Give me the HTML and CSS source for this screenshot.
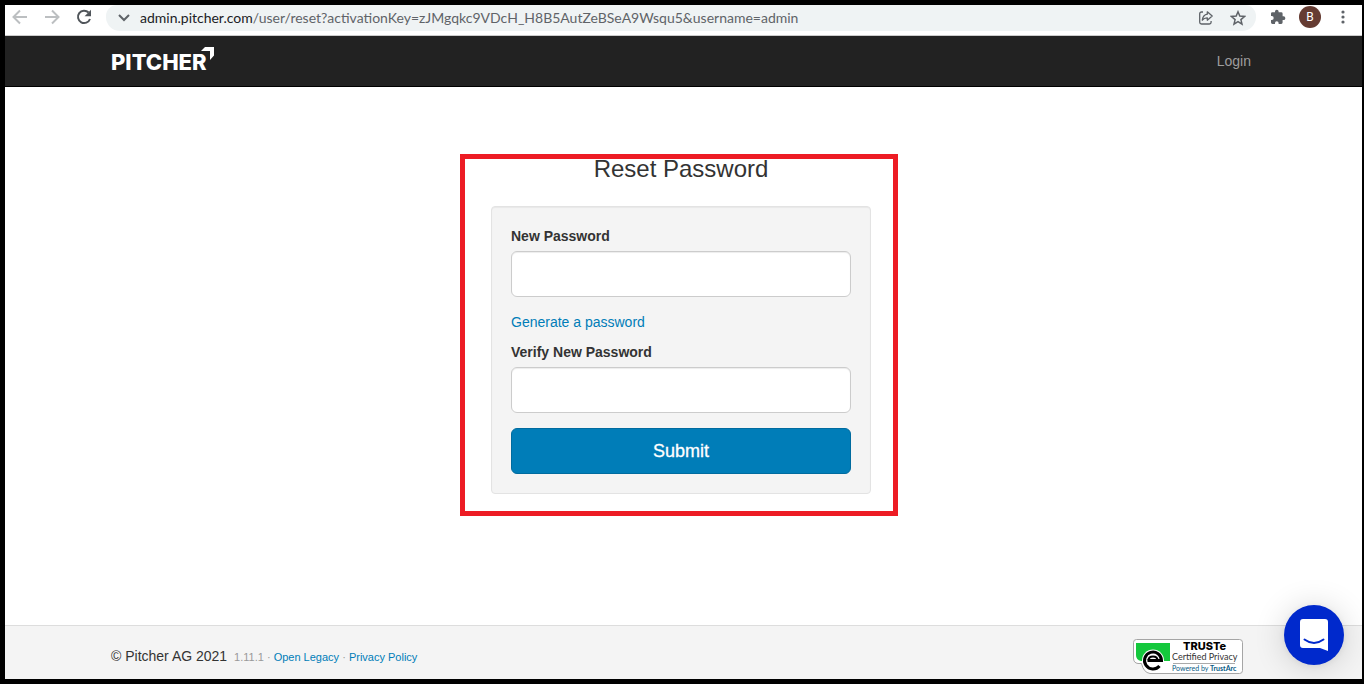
FILE: index.html
```html
<!DOCTYPE html>
<html lang="en">
<head>
<meta charset="utf-8">
<title>Reset Password</title>
<link rel="stylesheet" href="styles.css">
</head>
<body>
<div class="window">
  <div class="toolbar">
    <button class="tool" aria-label="Back"><svg width="16" height="16" viewBox="0 0 16 16" fill="none" stroke="#bcbfc1" stroke-width="2"><path d="M15 8H2M8 1.500 1.500 8 8 14.500"/></svg></button>
    <button class="tool" aria-label="Forward"><svg width="16" height="16" viewBox="0 0 16 16" fill="none" stroke="#bcbfc1" stroke-width="2"><path d="M1 8h13M8 1.500 14.500 8 8 14.500"/></svg></button>
    <button class="tool" aria-label="Reload"><svg width="16" height="16" viewBox="0 0 16 16" fill="none" stroke="#50555a" stroke-width="2"><path d="M12.600 3.500A6.200 6.200 0 1 0 14 10"/><path d="M15 .8v6.400H8.600z" fill="#50555a" stroke="none"/></svg></button>
    <div class="address">
      <button class="tool" aria-label="Site information"><svg width="12" height="8" viewBox="0 0 12 8" fill="none" stroke="#5f6368" stroke-width="2"><path d="M1 1l5 5 5-5"/></svg></button>
      <span class="url"><span class="host">admin.pitcher.com</span>/user/reset?activationKey=zJMgqkc9VDcH_H8B5AutZeBSeA9Wsqu5&amp;username=admin</span>
      <button class="tool" aria-label="Share"><svg width="16" height="16" viewBox="0 0 16 16" fill="none" stroke="#5f6368" stroke-width="1.300"><path d="M5 2H3.500A1.800 1.800 0 0 0 1.700 3.800v8.400A1.800 1.800 0 0 0 3.500 14h7.800a1.800 1.800 0 0 0 1.800-1.800V11"/><path d="M9.300 1.800 14.200 6l-4.900 4.200V7.800C7 7.700 5.500 8.500 4.300 10.200 4.700 7 6.200 4.700 9.300 4.200z" stroke-linejoin="round"/></svg></button>
      <button class="tool" aria-label="Bookmark"><svg width="16" height="16" viewBox="0 0 16 16" fill="none" stroke="#5f6368" stroke-width="1.500"><path d="M8 1.800l1.800 4.300 4.700.4-3.600 3.100 1.100 4.600L8 11.700l-4 2.500 1.100-4.600-3.600-3.100 4.700-.4z"/></svg></button>
    </div>
    <button class="tool" aria-label="Extensions"><svg width="16" height="16" viewBox="0 0 16 16" fill="#5f6368"><path d="M13.500 7.300h-.9V4.600a1.400 1.400 0 0 0-1.400-1.400H8.600v-.7a1.800 1.800 0 0 0-3.600 0v.7H2.400A1.400 1.400 0 0 0 1 4.600v2.500h.8a1.900 1.900 0 0 1 0 3.800H1v2.700A1.400 1.400 0 0 0 2.400 15H5v-.9a1.800 1.800 0 0 1 3.600 0v.9h2.600a1.400 1.400 0 0 0 1.400-1.400v-2.600h.9a1.850 1.850 0 0 0 0-3.700z"/></svg></button>
    <button class="avatar" aria-label="Profile">B</button>
    <button class="tool" aria-label="Menu"><svg width="4" height="14" viewBox="0 0 4 14" fill="#5f6368"><circle cx="2" cy="2" r="1.600"/><circle cx="2" cy="7" r="1.600"/><circle cx="2" cy="12" r="1.600"/></svg></button>
  </div>

  <header class="navbar">
    <div class="container">
      <a class="brand" href="#"><span>PITCHER</span><svg class="brand-mark" width="13" height="13" viewBox="0 0 13 13" fill="#fff"><path d="M4 0h9v8.500L9 13V4H0z"/></svg></a>
      <a class="login" href="#">Login</a>
    </div>
  </header>

  <main class="content">
    <section class="reset">
      <h1>Reset Password</h1>
      <form class="well">
        <label for="new-password">New Password</label>
        <input class="field" id="new-password" type="password">
        <p class="generate"><a href="#">Generate a password</a></p>
        <label for="verify-password">Verify New Password</label>
        <input class="field" id="verify-password" type="password">
        <button class="submit" type="submit">Submit</button>
      </form>
    </section>
  </main>

  <footer class="footer">
    <div class="container">
      <p class="legal">© Pitcher AG 2021 <small>&nbsp;1.11.1 · <a href="#">Open Legacy</a> · <a href="#">Privacy Policy</a></small></p>
      <a class="truste" href="#" aria-label="TRUSTe Certified Privacy"><svg width="110" height="35" viewBox="0 0 110 35">
        <path d="M3.500.5h103a3 3 0 0 1 3 3v28a3 3 0 0 1-3 3H17Q10.500 33.500 8.500 24.500H5Q.5 24 .5 19V3.500a3 3 0 0 1 3-3z" fill="#fff" stroke="#a5a5a5"/>
        <path d="M3 4h34v18H8Q3 21 3 16z" fill="#14c83c"/>
        <circle cx="20" cy="21.500" r="11" fill="#fff"/>
        <path d="M26.500 27A8.500 8.500 0 1 1 28.500 21.500H14.500" fill="none" stroke="#000" stroke-width="3"/>
        <path d="M15.500 21.500Q15.500 17.500 20 17.500T24.500 21.500" fill="none" stroke="#000" stroke-width="2"/>
        <text class="seal-name" x="50" y="11">TRUSTe</text>
        <text class="seal-line" x="39" y="21">Certified Privacy</text>
        <path d="M40 24.500h62" stroke="#aaa"/>
        <text class="seal-powered" x="39" y="32">Powered by <tspan class="seal-strong">TrustArc</tspan></text>
      </svg></a>
    </div>
  </footer>
  <button class="chat" aria-label="Open chat"><svg width="28" height="32" viewBox="0 0 28 32"><path d="M3 0h22a3 3 0 0 1 3 3v29l-8-3H3a3 3 0 0 1-3-3V3a3 3 0 0 1 3-3z" fill="#fff"/><path d="M4.500 20.500Q14 27.500 23.500 20.500" fill="none" stroke="#0029cc" stroke-width="2" stroke-linecap="round"/></svg></button>
</div>
</body>
</html>
```
FILE: styles.css
```css
* { box-sizing: border-box; }
body {
  margin: 0;
  background: #fff;
  color: #333;
  font: 14px/20px "Liberation Sans", Arial, sans-serif;
}
a { color: #007db8; text-decoration: none; }
button { padding: 0; border: 0; background: none; font: inherit; cursor: pointer; }
.window {
  position: relative;
  display: flex;
  flex-direction: column;
  min-height: calc(100vh - 2px);
  border: 5px solid #000;
  border-right-width: 2px;
}
.toolbar {
  display: flex;
  align-items: center;
  gap: 16px;
  height: 31px;
  padding: 0 17px 6px 7px;
  border-bottom: 1px solid #ccc;
}
.tool { display: flex; flex: none; }
.address {
  display: flex;
  flex: 1;
  align-items: center;
  gap: 16px;
  min-width: 0;
  height: 26px;
  margin: 1px -2px 0 -2px;
  padding: 0 10px 0 12px;
  border-radius: 11px 11px 14px 14px;
  background: #eff3f4;
}
.url {
  flex: 1;
  min-width: 0;
  margin-left: -6px;
  overflow: hidden;
  color: #5f6368;
  font: 14px/20px Lato, sans-serif;
  white-space: nowrap;
}
.host { color: #202124; }
.avatar {
  flex: none;
  width: 22px;
  height: 22px;
  margin: 0 4px 0 -3px;
  border-radius: 50%;
  background: #653b32;
  color: #fff;
  font: 12px/22px Roboto, sans-serif;
}
.navbar {
  height: 51px;
  padding-right: 5px;
  border-bottom: 1px solid #000;
  background: #222;
}
.container {
  display: flex;
  align-items: center;
  justify-content: space-between;
  max-width: 1140px;
  height: 100%;
  margin: 0 auto;
}
.brand {
  position: relative;
  padding-top: 1px;
  color: #fff;
  font: 800 22px/24px Inter, sans-serif;
}
.brand-mark { position: absolute; top: -2px; right: -7px; }
.login { color: #9d9d9d; }
.content { flex: 1; padding: 69px 5px 60px 0; }
.reset { position: relative; width: 380px; margin: 0 auto; }
.reset::after {
  content: "";
  position: absolute;
  inset: -2px -27px -22px -31px;
  border: 5px solid #ed1c24;
  pointer-events: none;
}
h1 {
  margin: 0 0 24px;
  font-size: 24px;
  font-weight: 400;
  line-height: 26px;
  text-align: center;
}
.well {
  padding: 19px;
  border: 1px solid #e3e3e3;
  border-radius: 4px;
  background: #f4f4f4;
  box-shadow: inset 0 1px 1px rgba(0, 0, 0, .05);
}
.well label { display: block; margin-bottom: 5px; font-weight: 700; }
.field {
  display: block;
  width: 100%;
  height: 46px;
  margin-bottom: 15px;
  padding: 10px 16px;
  border: 1px solid #ccc;
  border-radius: 6px;
  background: #fff;
  box-shadow: inset 0 1px 1px rgba(0, 0, 0, .075);
  font-size: 18px;
}
.generate { margin: 0 0 10px; }
.submit {
  display: block;
  width: 100%;
  height: 46px;
  border: 1px solid #006b9f;
  border-radius: 6px;
  background: #007db8;
  color: #fff;
  font-size: 18px;
  -webkit-text-stroke: 0.3px #fff;
}
.footer {
  height: 54px;
  padding: 8px 5px 0 0;
  border-top: 1px solid #ddd;
  background: #f4f4f4;
}
.legal { margin: 0; }
.legal small { color: #999; font-size: 11px; }
.truste { display: flex; margin-right: 8px; }
.seal-name { fill: #000; font: 800 11px Inter, sans-serif; }
.seal-line { fill: #333; font: 9px Lato, sans-serif; }
.seal-powered { fill: #075a85; font: 7px Lato, sans-serif; }
.seal-strong { font-weight: 700; }
.chat {
  position: absolute;
  right: 18px;
  bottom: 14px;
  display: flex;
  align-items: center;
  justify-content: center;
  width: 60px;
  height: 60px;
  border-radius: 50%;
  background: #0029cc;
  box-shadow: 0 1px 6px rgba(0, 0, 0, .06), 0 2px 32px rgba(0, 0, 0, .16);
}
```
